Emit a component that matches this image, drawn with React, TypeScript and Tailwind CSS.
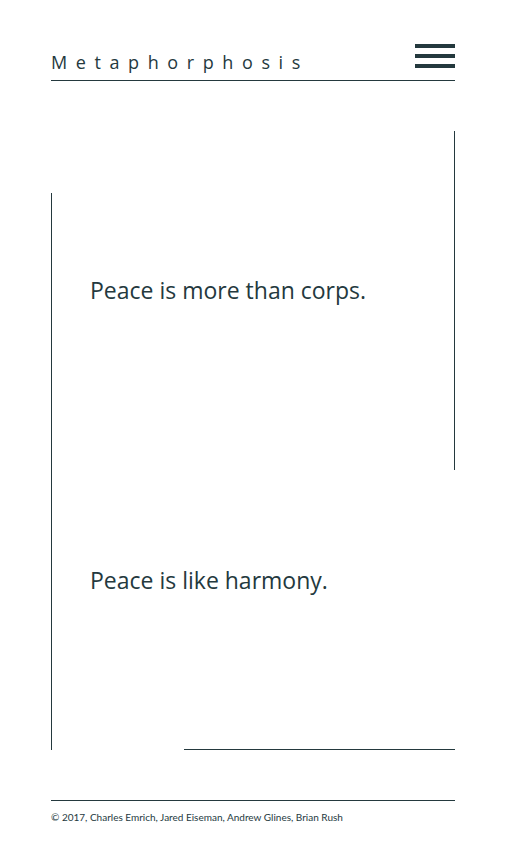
import React from 'react';

const ink = 'text-[#24393e]';

const quotes = ['Peace is more than corps.', 'Peace is like harmony.'];

const App: React.FC = () => {
    return (
        <div className={`min-h-[864px] bg-white px-[51px] ${ink}`}>
            {/* Header */}
            <header className="flex items-end justify-between border-b border-[#24393e] pt-[44px] pb-[12px]">
                <h1 className="mb-[-3px] text-[18px] leading-none tracking-[8.6px] font-['Open_Sans',sans-serif]">
                    Metaphorphosis
                </h1>
                <button className="flex w-[40px] flex-col gap-[6px]" aria-label="Menu">
                    <span className="block h-[4px] w-full bg-[#24393e]"></span>
                    <span className="block h-[4px] w-full bg-[#24393e]"></span>
                    <span className="block h-[4px] w-full bg-[#24393e]"></span>
                </button>
            </header>

            {/* First panel, right rule */}
            <section className="mt-[50px] h-[339px] border-r border-[#24393e] pt-[145px] pl-[39px]">
                <p className="text-[23px] leading-[28px] font-['Open_Sans',sans-serif]">{quotes[0]}</p>
            </section>

            {/* Second panel, left rule, overlapping the first */}
            <section className="-mt-[277px] flex h-[557px] flex-col border-l border-[#24393e]">
                <p className="pt-[373px] pl-[38px] text-[23px] leading-[28px] font-['Open_Sans',sans-serif]">{quotes[1]}</p>
                <div className="mt-auto ml-[132px] h-px bg-[#24393e]"></div>
            </section>

            {/* Footer */}
            <footer className="mt-[50px] border-t border-[#24393e] pt-[10px]">
                <p className="text-[10px] leading-[12px] font-['Lato',sans-serif]">
                    © 2017, Charles Emrich, Jared Eiseman, Andrew Glines, Brian Rush
                </p>
            </footer>
        </div>
    );
};

export default App;
